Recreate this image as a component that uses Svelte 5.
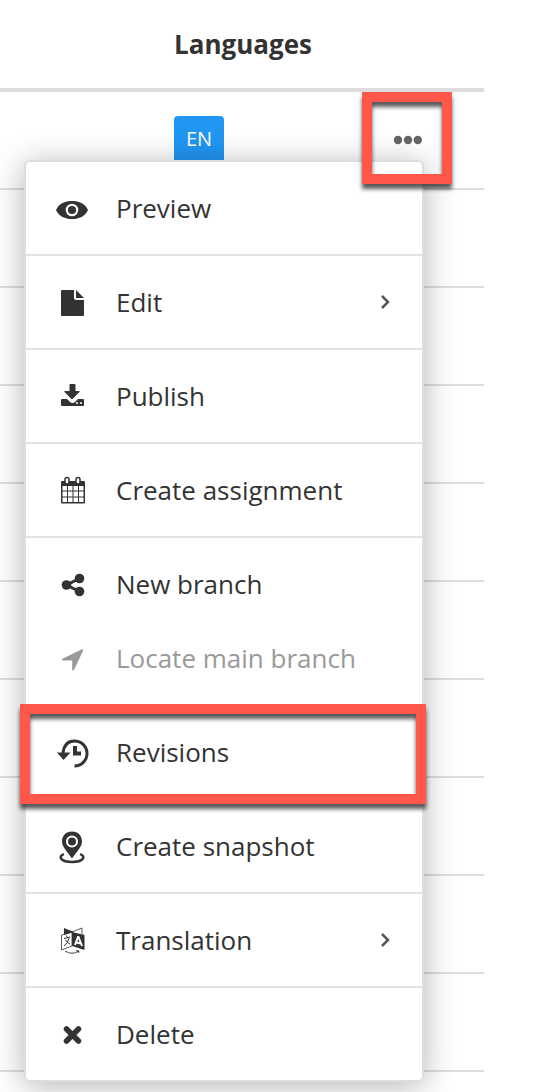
<script lang="ts">
  type Item = {
    label: string;
    icon: string;
    submenu?: boolean;
    disabled?: boolean;
    highlighted?: boolean;
  };

  const groups: Item[][] = [
    [{ label: 'Preview', icon: 'eye' }],
    [{ label: 'Edit', icon: 'file', submenu: true }],
    [{ label: 'Publish', icon: 'publish' }],
    [{ label: 'Create assignment', icon: 'calendar' }],
    [
      { label: 'New branch', icon: 'share' },
      { label: 'Locate main branch', icon: 'arrow', disabled: true }
    ],
    [{ label: 'Revisions', icon: 'history', highlighted: true }],
    [{ label: 'Create snapshot', icon: 'pin' }],
    [{ label: 'Translation', icon: 'translate', submenu: true }],
    [{ label: 'Delete', icon: 'cross' }]
  ];

  const emptyRows = Array.from({ length: 9 });

  let open = $state(true);
</script>

{#snippet glyph(name: string)}
  <svg class="icon" viewBox="0 -2 36 36" fill="currentColor" aria-hidden="true">
    {#if name === 'eye'}
      <path d="M2 18C5 11.500 11 9 18 9s13 2.500 16 9c-3 6.500-9 9-16 9S5 24.500 2 18z" />
      <circle cx="18" cy="18" r="5.200" fill="none" stroke="#fff" stroke-width="2.200" />
    {:else if name === 'file'}
      <path d="M8 4h12v8q0 2 2 2h8v15q0 1-1 1H8q-1 0-1-1V5q0-1 1-1z" />
      <path d="M22 4l8 8h-8z" />
    {:else if name === 'publish'}
      <path d="M16.500 4h4q1 0 1 1v6H25q1 0 .5 1l-7 7h-1l-7-7q-.5-1 .5-1h4.500V5q0-1 1-1z" />
      <path d="M8 19h5l3 3q2.500 2 5 0l3-3h5q1 0 1 1v5q0 1-1 1H8q-1 0-1-1v-5q0-1 1-1z" />
      <path d="M22 23h2M26 23h2" stroke="#fff" stroke-width="1.500" />
    {:else if name === 'calendar'}
      <path d="M8 7h22q1 0 1 1v20q0 1.500-1 1.500H8q-1 0-1-1.500V8q0-1 1-1z" />
      <path
        d="M8.500 12h4.500v4.500H8.500zM14 12h4.500v4.500H14zM19.500 12h4.500v4.500h-4.500zM25 12h4.500v4.500H25zM8.500 17.500h4.500v5H8.500zM14 17.500h4.500v5H14zM19.500 17.500h4.500v5h-4.500zM25 17.500h4.500v5H25zM8.500 23.500h4.500V28H8.500zM14 23.500h4.500V28H14zM19.500 23.500h4.500V28h-4.500zM25 23.500h4.500V28H25z"
        fill="#fff"
      />
      <rect x="11" y="3.500" width="4" height="6.500" rx="2" fill="#fff" stroke="currentColor" stroke-width="1.500" />
      <rect x="22" y="3.500" width="4" height="6.500" rx="2" fill="#fff" stroke="currentColor" stroke-width="1.500" />
    {:else if name === 'share'}
      <path d="M25.500 10.500L12.500 17l13 6.500" fill="none" stroke="currentColor" stroke-width="3" />
      <circle cx="25.500" cy="10.500" r="4.800" />
      <circle cx="12.500" cy="17" r="4.800" />
      <circle cx="25.500" cy="23.500" r="4.800" />
    {:else if name === 'arrow'}
      <path d="M27.500 7.500q2-1 1.500 1.200L20 28q-1.500 1.500-1.800-.5V18.500H9q-2-.5-.5-1.700z" />
    {:else if name === 'history'}
      <path d="M9 17C10 9 14.500 5 20.500 5a12.500 12.500 0 1 1 0 25" fill="none" stroke="currentColor" stroke-width="3" />
      <path d="M3 16.500h13.500L9.500 24z" />
      <path d="M21 10v7.500h6" fill="none" stroke="currentColor" stroke-width="4" />
    {:else if name === 'pin'}
      <path d="M18 1.500C12 1.500 8 5.500 8 11.500c0 5 4.500 9 10 17 5.500-8 10-12 10-17 0-6-4-10-10-10z" />
      <circle cx="18" cy="11.500" r="5" fill="none" stroke="#fff" stroke-width="2" />
      <path
        d="M9 24.500c-5 2.500-2 7.500 9 7.500s14-5 9-7.500"
        fill="none"
        stroke="currentColor"
        stroke-width="2.500"
        stroke-linecap="round"
      />
    {:else if name === 'translate'}
      <path d="M10 4l10 4-10 3z" />
      <path d="M7.500 11L18 8v14L7.500 26zM18 8l10-4v7" fill="none" stroke="currentColor" stroke-width=".8" />
      <path d="M18 8l12.500 3v15L18 22z" />
      <path
        d="M10 14.500l6-1.500M12.500 11.500l.8 2M15 14q-1 5-5 8M11.500 16q2 3 4.500 4"
        fill="none"
        stroke="currentColor"
      />
      <path d="M21 21l3-8h.5l3.500 9M22 18.500l5 1" fill="none" stroke="#fff" stroke-width="2" />
      <path d="M11 27q7 4.500 14 0M25 27l-3-.5M25 27l-.5 2" fill="none" stroke="currentColor" stroke-width=".9" />
    {:else}
      <path
        d="M12.500 11l12 12M24.500 11l-12 12"
        fill="none"
        stroke="currentColor"
        stroke-width="5.500"
        stroke-linecap="round"
      />
    {/if}
  </svg>
{/snippet}

<main class="page">
  <table class="content-table">
    <thead>
      <tr>
        <th class="col-name"></th>
        <th scope="col">Languages</th>
        <th class="col-actions"></th>
      </tr>
    </thead>
    <tbody>
      <tr>
        <td></td>
        <td><span class="badge">EN</span></td>
        <td>
          <button class="more" aria-label="More actions" aria-expanded={open} onclick={() => (open = !open)}>
            <svg viewBox="0 0 30 10" width="30" height="10" fill="currentColor" aria-hidden="true">
              <circle cx="6" cy="5" r="4.200" />
              <circle cx="16" cy="5" r="4.200" />
              <circle cx="25.800" cy="5" r="4.200" />
            </svg>
            <span class="highlight highlight-more"></span>
          </button>
        </td>
      </tr>
      {#each emptyRows as _}
        <tr>
          <td></td>
          <td></td>
          <td></td>
        </tr>
      {/each}
    </tbody>
  </table>

  {#if open}
    <nav class="menu" aria-label="Item actions">
      {#each groups as group}
        <ul class="group">
          {#each group as item}
            <li>
              <button class="item" disabled={item.disabled}>
                {@render glyph(item.icon)}
                <span class="label">{item.label}</span>
                {#if item.submenu}
                  <svg class="chevron" viewBox="0 0 15 20" aria-hidden="true">
                    <path d="M5 4l6 6-6 6" fill="none" stroke="currentColor" stroke-width="2.500" />
                  </svg>
                {/if}
              </button>
              {#if item.highlighted}
                <span class="highlight highlight-item"></span>
              {/if}
            </li>
          {/each}
        </ul>
      {/each}
    </nav>
  {/if}
</main>

<style>
  :global(body) {
    margin: 0;
    background: #fff;
  }

  .page {
    position: relative;
    padding: 0 60px 20px 0;
    color: #333;
    font-family: 'Open Sans', 'Noto Sans', sans-serif;
    font-size: 26px;
  }

  .content-table {
    width: 100%;
    table-layout: fixed;
    border-collapse: separate;
    border-spacing: 0;
  }

  th,
  td {
    box-sizing: border-box;
    padding: 0;
    text-align: left;
  }

  th {
    height: 92px;
    border-bottom: 4px solid #ddd;
    font-weight: 700;
  }

  td {
    height: 98px;
    border-bottom: 2px solid #ddd;
  }

  .col-name {
    width: 174px;
  }

  .col-actions {
    width: 122px;
  }

  .badge {
    box-sizing: border-box;
    display: flex;
    align-items: center;
    justify-content: center;
    width: 50px;
    height: 48px;
    padding-bottom: 4px;
    border-radius: 4px;
    background: #2196f3;
    color: #fff;
    font-size: 20px;
  }

  .more {
    position: relative;
    display: flex;
    align-items: center;
    justify-content: center;
    width: 90px;
    height: 96px;
    padding: 0;
    border: 0;
    background: none;
    color: #666;
    cursor: pointer;
  }

  .menu {
    position: absolute;
    top: 160px;
    left: 24px;
    right: 120px;
    z-index: 1;
    border: 2px solid #ddd;
    border-radius: 6px;
    background: #fff;
    background-clip: padding-box;
    box-shadow: 0 4px 32px rgba(0, 0, 0, 0.3);
  }

  .group {
    position: relative;
    margin: 0;
    padding: 9px 0;
    border-bottom: 2px solid #e2e2e2;
    list-style: none;
  }

  .group:last-child {
    border-bottom: 0;
  }

  .item {
    display: flex;
    align-items: center;
    gap: 26px;
    width: 100%;
    height: 74px;
    padding: 0 30px 0 28px;
    border: 0;
    background: none;
    color: inherit;
    font: inherit;
    text-align: left;
    cursor: pointer;
  }

  .item:disabled {
    color: #999;
    cursor: default;
  }

  .icon {
    flex: none;
    width: 36px;
    height: 36px;
  }

  .label {
    flex: 1;
    white-space: nowrap;
  }

  .chevron {
    width: 15px;
    height: 20px;
    color: #555;
  }

  .highlight {
    position: absolute;
    z-index: 2;
    border: 10px solid #ff584b;
    filter: drop-shadow(0 5px 2px rgba(0, 0, 0, 0.65));
    pointer-events: none;
  }

  .highlight-more {
    inset: 0 0 4px;
  }

  .highlight-item {
    inset: -2px -4px -6px -6px;
  }
</style>
